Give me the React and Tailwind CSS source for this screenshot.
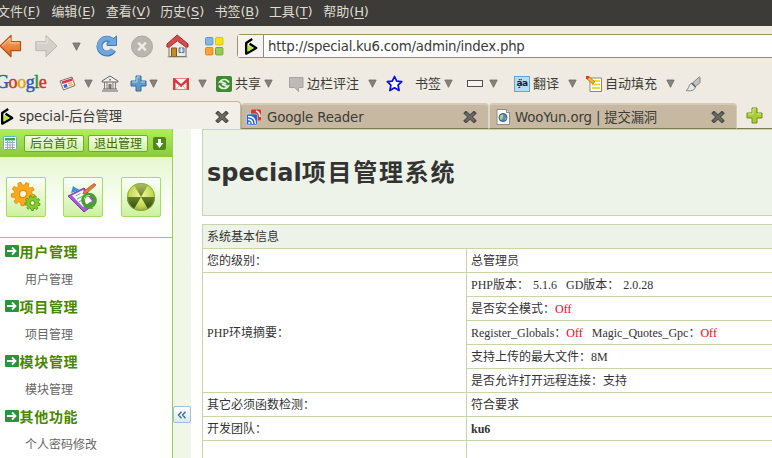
import React from 'react';

const UI = 'font-["DejaVu_Sans","Noto_Sans_CJK_SC",sans-serif]';
const SERIF = 'font-["Liberation_Serif","Noto_Sans_CJK_SC",serif]';

function Svg({ w, h, box, children, className = '' }) {
  return (
    <svg width={w} height={h} viewBox={box || `0 0 ${w} ${h}`} className={`block shrink-0 ${className}`}>
      {children}
    </svg>
  );
}

const Tri = () => (
  <Svg w={9} h={9}>
    <path d="M.8 1h7.4L4.5 8.3z" fill="#85827a" stroke="#6d6a64" strokeWidth=".8" />
  </Svg>
);

const Cell = ({ className, children }) => (
  <div className={`flex shrink-0 items-center ${className}`}>{children}</div>
);

const Ku6 = () => (
  <Svg w={14} h={17}>
    <path d="M8.2 1 2.2 5v10.6L12.2 10 5.6 5.8" fill="none" stroke="#000" strokeWidth="2.4" strokeLinejoin="round" />
    <path d="M3.8 7v6.8l6-3.7z" fill="#b5ee1c" />
  </Svg>
);

const Close = () => (
  <Svg w={14} h={12}>
    <path d="M3 2.2 11 9.8M11 2.2 3 9.8" stroke="#504f4b" strokeWidth="4" strokeLinecap="square" />
    <path d="M3 2.2 11 9.8M11 2.2 3 9.8" stroke="#6d6a65" strokeWidth="2" />
  </Svg>
);

const menus = [['文件', 'F'], ['编辑', 'E'], ['查看', 'V'], ['历史', 'S'], ['书签', 'B'], ['工具', 'T'], ['帮助', 'H']];

function MenuBar() {
  return (
    <div className="flex h-[26px] shrink-0 items-center bg-[#3c3b37] pb-[3px] text-[13px] leading-none text-[#dfdbd2]">
      <div className="-ml-[3px] flex">
        {menus.map(([t, k]) => (
          <span key={k} className="w-[54.4px] shrink-0 whitespace-nowrap tracking-[-0.1px]">
            {t}(<span className="underline underline-offset-2">{k}</span>)
          </span>
        ))}
      </div>
    </div>
  );
}

function NavBar() {
  return (
    <div className="flex h-[38px] items-center pt-[2px]">
      <Cell className="w-[35px]">
        <Svg w={22} h={24}>
          <defs>
            <linearGradient id="or" x2="0" y2="1"><stop stopColor="#f9b070" /><stop offset="1" stopColor="#df6313" /></linearGradient>
          </defs>
          <path d="M0 12 11 1.5v6.2h9.5v9H11v6z" fill="url(#or)" stroke="#b5521b" strokeWidth="1.2" strokeLinejoin="round" />
          <path d="M1.8 12 10 4v4.8h9.4" fill="none" stroke="#fccb9e" />
        </Svg>
      </Cell>
      <Cell className="w-[37px]">
        <Svg w={23} h={24}>
          <path d="M22 12 11 1.5v6.2H.8v9H11v6z" fill="#d5d1ca" stroke="#bbb7b0" strokeLinejoin="round" />
          <path d="M2 9h10V4" fill="none" stroke="#e9e5df" />
        </Svg>
      </Cell>
      <Cell className="w-[24px]"><Tri /></Cell>
      <Cell className="w-[35px]">
        <Svg w={22} h={22}>
          <path d="M16.5 6.3A7.4 7.4 0 1 0 17.3 15" fill="none" stroke="#3e78b8" strokeWidth="6" />
          <path d="M20.5 1v9.5H11V8l3-1.5z" fill="#6fa6dc" stroke="#3e78b8" />
          <path d="M17 6.8A7.4 7.4 0 1 0 17 14.7" fill="none" stroke="#6fa6dc" strokeWidth="4.4" />
        </Svg>
      </Cell>
      <Cell className="w-[35px]">
        <Svg w={23} h={23}>
          <circle cx="11" cy="11.5" r="10.5" fill="#b9b5af" stroke="#aaa6a0" />
          <path d="m7.2 7.7 7.6 7.6m0-7.6-7.6 7.6" stroke="#efebe5" strokeWidth="2.6" />
        </Svg>
      </Cell>
      <Cell className="w-[39px]">
        <Svg w={23} h={24}>
          <path d="M3 11 11.5 4 20 11v11.5H3z" fill="#eceae6" stroke="#77736e" />
          <path d="M5.5 14h5v8.5h-5z" fill="#c58a29" stroke="#83520f" />
          <path d="M13 14h5v4.5h-5z" fill="#a8c4de" stroke="#5f7487" />
          <path d="M15.5 14v4.5" stroke="#e8eef5" />
          <path d="M1 13V10L11.2 1 22 10v3h-2.2L11.3 6.8l-8 6.2z" fill="#d44c4c" stroke="#a32a2f" strokeLinejoin="round" />
          <path d="M1.5 22.9h20" stroke="#7a8a5c" strokeOpacity=".7" />
        </Svg>
      </Cell>
      <Cell className="w-[32px]">
        <Svg w={19} h={19}>
          <rect x=".5" y=".5" width="7.4" height="7.4" rx="1" fill="#7fb8e4" stroke="#5e94c4" />
          <rect x="10.5" y=".5" width="7.4" height="7.4" rx="1" fill="#fbe314" stroke="#dcbd10" />
          <rect x=".5" y="10.5" width="7.4" height="7.4" rx="1" fill="#fca43c" stroke="#ef7e14" />
          <rect x="10.5" y="10.5" width="7.4" height="7.4" rx="1" fill="#99cb57" stroke="#71a73a" />
        </Svg>
      </Cell>
      <div className="flex h-[24px] flex-1 items-center rounded-l border border-r-0 border-[#a09069] bg-white">
        <div className="flex h-full w-[26px] items-center border-r border-[#8e8a80] bg-[#f6f4f0] pl-[6px]"><Ku6 /></div>
        <span className="pt-[2px] pl-[4px] text-[13.33px] leading-none tracking-[-0.23px] text-[#3c3b37]">http://special.ku6.com/admin/index.php</span>
      </div>
    </div>
  );
}

function ToolBar() {
  return (
    <div className="flex h-[37px] items-center pt-[2px] text-[13px] leading-none whitespace-nowrap text-[#3c3b37]">
      <Cell className='w-[59px] pb-[3px] font-["Liberation_Serif",serif] text-[18px] tracking-[-0.45px] [-webkit-text-stroke:0.5px]'>
        <span className="-ml-[4px] text-[#2a5bc0]">G</span><span className="text-[#cf3427]">o</span><span className="text-[#d9a514]">o</span><span className="text-[#2a5bc0]">g</span><span className="text-[#25943a]">l</span><span className="text-[#cf3427]">e</span>
      </Cell>
      <Cell className="w-[25px]">
        <Svg w={17} h={15}>
          <path d="m1 5 12-4 3 8.5L4.5 14z" fill="#fafafa" stroke="#77736d" strokeLinejoin="round" />
          <path d="m2.5 5.6 10.3-3.4.8 2.5-10.2 3.4z" fill="#df3652" />
          <path d="m4.2 9 3.5-1.2 1 3.4-3.3.9z" fill="#3d62d1" />
          <path d="m9 7.8 4.2-1.5m-3.6 3.5 4.2-1.5" stroke="#f0a22f" strokeWidth="1.4" />
        </Svg>
      </Cell>
      <Cell className="w-[17px]"><Tri /></Cell>
      <Cell className="w-[29px]">
        <Svg w={18} h={17}>
          <path d="m1 6 8-5 8 5v1H1zM2 14h14M1 16h16" fill="#efefef" stroke="#66645f" />
          <path d="M3.5 7v7m2.5-7v7m6-7v7m2.5-7v7" stroke="#807d78" />
          <path d="M7.5 9h3v5h-3z" fill="#77736e" /><circle cx="9" cy="4.7" r="1" fill="#777" />
        </Svg>
      </Cell>
      <Cell className="w-[19px]">
        <Svg w={17} h={17}>
          <path d="M6 1h5v5h5v5h-5v5H6v-5H1V6h5z" fill="#5d9ac9" stroke="#39668e" strokeLinejoin="round" />
          <path d="M7 6.8V2h3M2 7h5m4 0h4" stroke="#b9dcf3" fill="none" />
        </Svg>
      </Cell>
      <Cell className="w-[24px]"><Tri /></Cell>
      <Cell className="w-[25px]">
        <Svg w={16} h={12}>
          <path d="M0 0h16v12H0z" fill="#fdf5f4" />
          <path d="M.5.5h15v11H.5z" fill="none" stroke="#e08080" />
          <path d="M1.3 12V1.5L8 7.6l6.7-6.1V12" fill="none" stroke="#dd3636" strokeWidth="2.4" />
          <path d="m3 11.5 3.4-4m6.6 4-3.4-4" stroke="#eba7a7" />
        </Svg>
      </Cell>
      <Cell className="w-[18px]"><Tri /></Cell>
      <Cell className="w-[19px]">
        <Svg w={16} h={16}>
          <rect width="16" height="16" rx="2" fill="#3e8a31" />
          <path d="M13 6.5C11 2.5 5.7 2.7 3.8 6c3.2-.8 4 2 6.5 1.6M3 9.5c2 4 7.3 3.8 9.2.5-3.2.8-4-2-6.5-1.6" fill="none" stroke="#e4f3df" strokeWidth="1.7" />
        </Svg>
      </Cell>
      <Cell className="w-[29px]">共享</Cell>
      <Cell className="w-[25px]"><Tri /></Cell>
      <Cell className="w-[18px]">
        <Svg w={15} h={16}><path d="M.5 1.5h13.5v10H9.5v4l-4-4h-5z" fill="#bcbab7" stroke="#a5a3a0" /></Svg>
      </Cell>
      <Cell className="w-[61px]">边栏评注</Cell>
      <Cell className="w-[18px]"><Tri /></Cell>
      <Cell className="w-[29px]">
        <Svg w={17} h={17}><path d="m8.5 1.5 2.2 4.7 5 .5-3.6 3.5 1 5.3-4.6-2.7-4.6 2.7 1-5.3L1.3 6.7l5-.5z" fill="#fff" stroke="#0909f5" strokeWidth="1.7" strokeLinejoin="round" /></Svg>
      </Cell>
      <Cell className="w-[29px]">书签</Cell>
      <Cell className="w-[23px]"><Tri /></Cell>
      <Cell className="w-[22px]"><div className="h-[7px] w-[16px] border border-[#504e49] bg-[#f5f4f2]" /></Cell>
      <Cell className="w-[25px]"><Tri /></Cell>
      <Cell className="w-[19px]">
        <div className="flex h-[16px] w-[16px] items-center justify-center border border-[#5da8d6] bg-[#b5dcf4] text-[9px] font-bold tracking-[-0.5px] text-[#15202b]">ạ̈a</div>
      </Cell>
      <Cell className="w-[35px]">翻译</Cell>
      <Cell className="w-[18px]"><Tri /></Cell>
      <Cell className="w-[19px]">
        <Svg w={17} h={16}>
          <path d="M4 2h11.5v13.5H4z" fill="#fffef1" stroke="#8c897f" />
          <path d="M8 5h6M6 8.5h8m-8 3.5h8" stroke="#eec91e" strokeWidth="1.6" />
          <path d="m1 1 7 6" stroke="#9c6810" strokeWidth="3.6" /><path d="m1 1 6.6 5.6" stroke="#f8bc16" strokeWidth="2.5" /><path d="m0 0 2.5 2.2" stroke="#dd382e" strokeWidth="3.5" />
        </Svg>
      </Cell>
      <Cell className="w-[61px]">自动填充</Cell>
      <Cell className="w-[19px]"><Tri /></Cell>
      <Cell>
        <Svg w={16} h={16}>
          <path d="M8 6.5 14.5.8l.5.8v5L10 11z" fill="#c2c2c1" stroke="#868584" />
          <path d="M1 14.5c3-1 2-5 5.5-7.5l4 4c-1 3.5-5 4.5-9.5 3.5z" fill="#e7e7e6" stroke="#868584" />
          <path d="m6.5 7 4 4" stroke="#676665" strokeWidth="1.4" />
        </Svg>
      </Cell>
    </div>
  );
}

const TabText = ({ children }) => <span className="flex-1 pt-px whitespace-nowrap text-[13.33px] leading-none tracking-[-0.15px] text-[#3c3b37]">{children}</span>;

function Tabs() {
  return (
    <div className="flex h-[28px] items-end">
      <div className="flex h-[28px] w-[241px] items-center rounded-tr border-t border-r border-[#c3b59e] bg-[#f2eee8] pt-[2px] pr-[11px]">
        <Ku6 /><span className="w-[5px]" /><TabText>special-后台管理</TabText><Close />
      </div>
      <div className="flex h-[26px] w-[248px] items-center rounded-t border border-t-2 border-r-[#e0d6c6] border-b-[#857759] border-l-[#b8a98e] border-t-[#d6cab7] bg-[#c7b9a1] pt-px pr-[11px] pl-[4px]">
        <Svg w={17} h={17}>
          <rect x="5" y=".5" width="10" height="11" rx="1.5" fill="#dd3328" /><path d="M10 2c3 1 4 3 4 6" stroke="#fff" strokeWidth="1.5" fill="none" />
          <rect x=".5" y="5" width="11" height="11" rx="1.5" fill="#2167c9" stroke="#fff" strokeWidth=".5" />
          <path d="M2 7.5c5 0 7.5 3 7.5 7.5M2 10.5c3 0 4.5 2 4.5 4.5" stroke="#fff" strokeWidth="1.5" fill="none" /><circle cx="3.3" cy="13.9" r="1.1" fill="#fff" />
        </Svg>
        <span className="w-[4px]" /><TabText>Google Reader</TabText><Close />
      </div>
      <div className="flex h-[26px] w-[248px] items-center rounded-t border border-t-2 border-r-[#d6cab7] border-b-[#857759] border-l-[#e0d6c6] border-t-[#d6cab7] bg-[#c7b9a1] pt-px pr-[11px] pl-[6px]">
        <Svg w={15} h={16}>
          <path d="M1 .5h9.5l3 3v12H1z" fill="#f9f9f8" stroke="#8e8b84" /><path d="M10.5.5v3h3" fill="#ddd" stroke="#8e8b84" />
          <circle cx="7" cy="8.5" r="4" fill="#5588be" stroke="#345a87" /><path d="M5 6c2-1 3 0 2 2s-1 3-2 3-2-4 0-5zm5 2 .5 2-1.5 1z" fill="#b8cf72" />
        </Svg>
        <span className="w-[4px]" /><TabText>WooYun.org | 提交漏洞</TabText><Close />
      </div>
      <div className="flex h-[26px] flex-1 items-center border-b border-[#857759] pl-[9px]">
        <Svg w={17} h={17}>
          <path d="M6 1h5v5h5v5h-5v5H6v-5H1V6h5z" fill="#a8cd35" stroke="#6c9019" strokeLinejoin="round" />
          <path d="M7 7V2h3M2 7h5m4 0h4" stroke="#d8ec92" fill="none" />
        </Svg>
      </div>
    </div>
  );
}

const HeadBtn = ({ children }) => (
  <div className={`${SERIF} flex h-[17px] w-[60px] shrink-0 items-center justify-center rounded-[2px] border border-[#6fae20] bg-linear-to-b from-[#f4fde9] to-[#cdefa2] pt-px text-[12px] leading-none text-[#3c6a08]`}>{children}</div>
);

const Tile = ({ children }) => (
  <div className="flex h-[40px] w-[40px] items-center justify-center rounded-[2px] border border-[#a5dc68] bg-linear-to-b from-[#fdfffa] to-[#cdf19e]">{children}</div>
);

function gearPath(r, teeth) {
  const pts = [];
  for (let i = 0; i < teeth; i += 1) {
    [[-0.3, 0.76], [-0.19, 1], [0.19, 1], [0.3, 0.76]].forEach(([o, k]) => {
      const a = ((i + o) / teeth) * Math.PI * 2;
      pts.push(`${(Math.cos(a) * r * k).toFixed(2)} ${(Math.sin(a) * r * k).toFixed(2)}`);
    });
  }
  return `M${pts.join('L')}z`;
}

const Gear = ({ cx, cy, r, fill, edge }) => (
  <g transform={`translate(${cx} ${cy}) rotate(12)`}>
    <path d={gearPath(r, 9)} fill={fill} stroke={edge} strokeWidth=".9" strokeLinejoin="round" />
    <circle r={r * 0.3} fill="#fdf6e0" stroke={edge} strokeWidth="1.1" />
  </g>
);

function Sidebar() {
  const groups = [['用户管理', '用户管理'], ['项目管理', '项目管理'], ['模块管理', '模块管理'], ['其他功能', '个人密码修改']];
  return (
    <aside className="flex w-[173px] shrink-0 flex-col border-r border-[#9bcd5b] bg-white">
      <div className="flex h-[28px] shrink-0 items-center bg-linear-to-b from-[#b1ee5c] to-[#8bc93c] pl-[3px]">
        <Svg w={15} h={15}>
          <rect x=".5" y=".5" width="13" height="13" rx="1" fill="#fff" stroke="#6ea9dc" />
          <path d="M2 2h10v2.5H2z" fill="#35a845" /><path d="M2 6.5h10M2 9h10M2 11.5h10M4.5 5v8M7 5v8M9.5 5v8" stroke="#8facce" />
        </Svg>
        <div className="ml-[6px] flex gap-[4px]"><HeadBtn>后台首页</HeadBtn><HeadBtn>退出管理</HeadBtn></div>
        <Svg w={13} h={13} className="ml-[5px]">
          <rect width="13" height="13" rx="2" fill="#4c8a18" /><path d="M5 2h3v4h2.3L6.5 11 2.7 6H5z" fill="#fff" />
        </Svg>
      </div>
      <div className="flex h-[81px] shrink-0 border-b border-[#9ccf5b] bg-linear-to-b from-[#e5f8cf] to-white to-70% pt-[20px] pl-[6px]">
        <div className="grid grid-cols-[57px_58px_40px]">
          <Tile>
            <Svg w={32} h={32}>
              <Gear cx={13} cy={13} r={11.8} fill="#fba91d" edge="#ea8c12" />
              <Gear cx={22.5} cy={22} r={7.6} fill="#86cb2e" edge="#57a51a" />
            </Svg>
          </Tile>
          <Tile>
            <Svg w={32} h={32}>
              <path d="m1 15 16-8 12 15-12 9z" fill="#a35cd5" stroke="#7e35af" strokeLinejoin="round" />
              <path d="m5 14.5 11-5.5 9 11-9 6z" fill="#f5fbfd" />
              <path d="m8.5 15 5-2.5M10 18l6-3m-4.500 6 5-2.600" stroke="#70b46d" />
              <path d="m4 12 2-7 3 2 4 2z" fill="#3d92dd" />
              <path d="m17 10 10-7.500 2 1.500-9 8-4 1z" fill="#e37d37" stroke="#a6481f" strokeWidth=".7" />
              <circle cx="22" cy="19.500" r="6" fill="none" stroke="#46a12b" strokeWidth="3.600" />
              <path d="m17 27 6-6 3 7z" fill="#46a12b" />
              <path d="M17 18.500c.5-3 3-4.500 6-4" stroke="#a5df70" fill="none" />
            </Svg>
          </Tile>
          <Tile>
            <Svg w={30} h={30}>
              <defs>
                <radialGradient id="ball" cx=".5" cy=".4" r=".65"><stop stopColor="#f4f8a0" /><stop offset=".65" stopColor="#c3d852" /><stop offset="1" stopColor="#7f9c2f" /></radialGradient>
                <linearGradient id="dk" x2="0" y2="1"><stop stopColor="#b3c069" /><stop offset=".5" stopColor="#6d8428" /><stop offset="1" stopColor="#2e4a12" /></linearGradient>
              </defs>
              <circle cx="15" cy="15" r="14" fill="url(#ball)" />
              <path d="M15 15 8 2.900a14 14 0 0 1 14 0zm0 0h14a14 14 0 0 1-7 12.100zm0 0L8 27.100A14 14 0 0 1 1 15z" fill="url(#dk)" />
              <circle cx="15" cy="15" r="13.6" fill="none" stroke="#8aa63c" strokeWidth=".8" />
            </Svg>
          </Tile>
        </div>
      </div>
      <div className="flex flex-col">
        {groups.map(([h, i]) => (
          <div key={h} className={`${SERIF} flex h-[55px] shrink-0 flex-col leading-none`}>
            <div className="flex h-[27px] shrink-0 items-center pt-px pl-[5px]">
              <Svg w={14} h={12} className="mb-[2px]">
                <rect width="14" height="12" rx="1" fill="#29943c" /><path d="M2 6h8M7 2.500 10.500 6 7 9.500" stroke="#fff" strokeWidth="1.8" fill="none" />
              </Svg>
              <span className="ml-[0.5px] pt-px text-[14px] font-bold tracking-[0.7px] text-[#498700]">{h}</span>
            </div>
            <div className="flex h-[28px] shrink-0 items-center pt-[2px] pl-[25px] text-[12px] text-[#666]">{i}</div>
          </div>
        ))}
      </div>
    </aside>
  );
}

const Row = ({ children, className = '' }) => <div className={`flex h-[24px] shrink-0 items-center border-b border-[#c8d6a7] pl-[4px] ${className}`}>{children}</div>;
const Off = ({ children }) => <span className="text-[#fb0018]">{children}</span>;

function Main() {
  return (
    <main className="ml-[11px] flex min-w-0 flex-1 flex-col text-[#333]">
      <div className="flex h-[87px] shrink-0 items-center border border-r-0 border-[#c8d6a7] bg-[#edf3e8] pl-[4px]">
        <h1 className="text-[24px] leading-none font-bold whitespace-nowrap">special<span className="tracking-[1.8px]">项目管理系统</span></h1>
      </div>
      <div className={`${SERIF} mt-[8px] flex shrink-0 flex-col border-t border-l border-[#c8d6a7] text-[12px] leading-none whitespace-pre`}>
        <Row className="bg-[#edf3e8]">系统基本信息</Row>
        <div className="grid grid-cols-[264px_1fr] content-start">
          <div className="flex flex-col border-r border-[#c8d6a7]">
            <Row>您的级别：</Row>
            <Row className="h-[120px]!">PHP环境摘要：</Row>
            <Row>其它必须函数检测：</Row>
            <Row>开发团队：</Row>
            <div className="h-[18px]" />
          </div>
          <div className="flex flex-col">
            <Row>总管理员</Row>
            <Row><span>PHP版本：</span><span className="pl-[4px]">5.1.6</span><span className="pl-[9px]">GD版本：</span><span className="pl-[4px]">2.0.28</span></Row>
            <Row>是否安全模式：<Off>Off</Off></Row>
            <Row>Register_Globals：<Off>Off</Off><span className="pl-[9px]">Magic_Quotes_Gpc：</span><Off>Off</Off></Row>
            <Row>支持上传的最大文件：8M</Row>
            <Row>是否允许打开远程连接：支持</Row>
            <Row>符合要求</Row>
            <Row className="font-bold">ku6</Row>
          </div>
        </div>
      </div>
    </main>
  );
}

export default function App() {
  return (
    <div className={`${UI} flex h-[458px] w-[772px] flex-col overflow-hidden bg-[#efebe3]`}>
      <MenuBar />
      <NavBar />
      <ToolBar />
      <Tabs />
      <div className="flex h-[329px] overflow-hidden bg-white">
        <Sidebar />
        <div className="flex w-[18px] shrink-0 flex-col bg-[#f0f6e8] pt-[277px]">
          <div className="flex h-[17px] w-[18px] items-center justify-center rounded-[2px] border border-[#a2bedd] bg-linear-to-b from-white to-[#d8e8f8]">
            <Svg w={10} h={8}><path d="M4.5.8 1.5 4l3 3.2M8.5.8 5.5 4l3 3.2" fill="none" stroke="#33689d" strokeWidth="1.3" /></Svg>
          </div>
        </div>
        <Main />
      </div>
    </div>
  );
}
